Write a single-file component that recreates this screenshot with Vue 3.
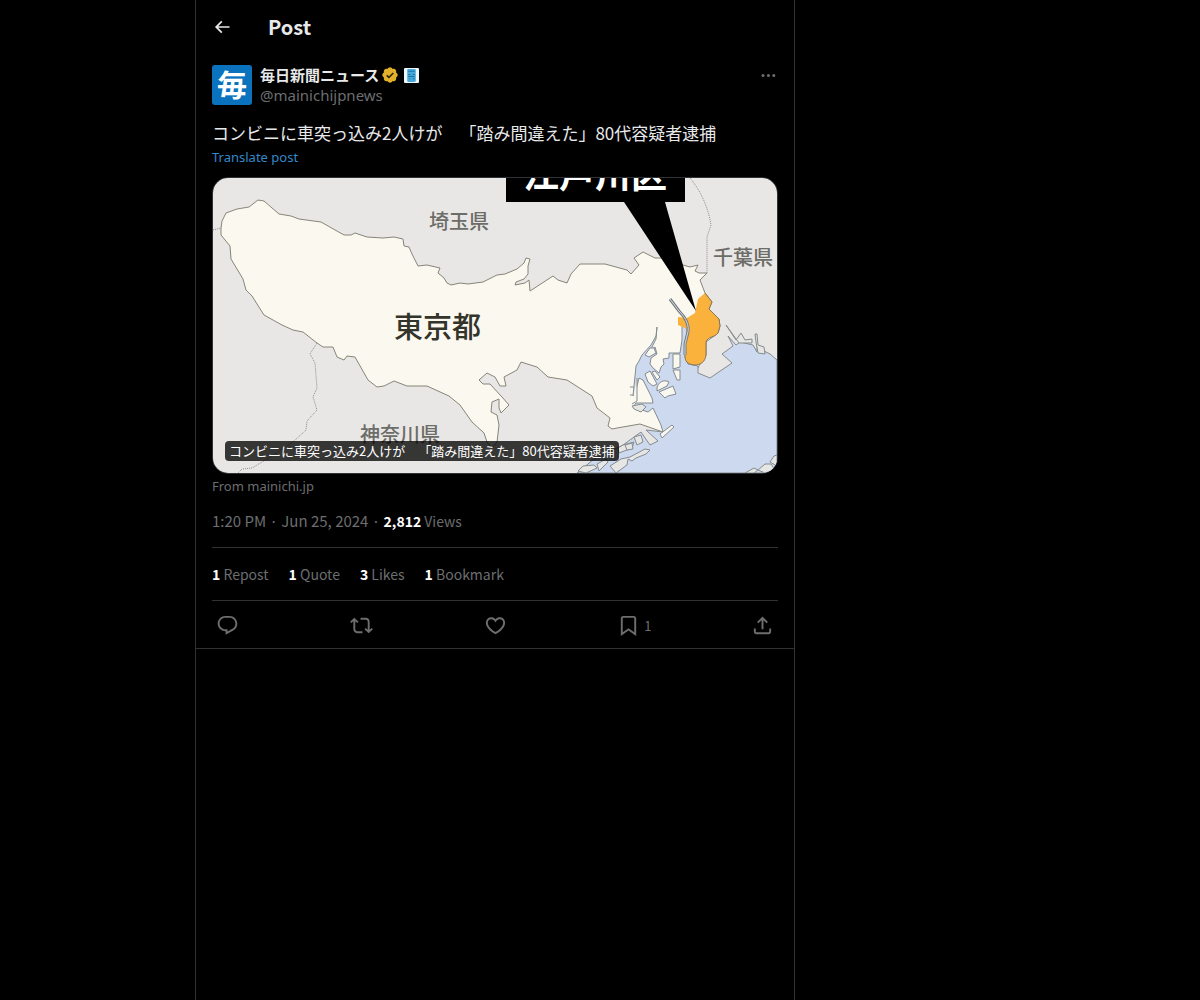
<template>
  <div class="page">
    <main class="column">
      <header class="topbar">
        <button type="button" class="icon-button" aria-label="Back">
          <svg class="back-icon" viewBox="0 0 24 24"><path :d="icons.back" /></svg>
        </button>
        <h1>Post</h1>
      </header>

      <article class="post">
        <div class="author">
          <a href="#" class="avatar" aria-label="毎日新聞ニュース">
            <svg viewBox="0 0 40 40">
              <rect width="40" height="40" rx="3" fill="#0b72be" />
              <text x="20" y="31" text-anchor="middle" class="avatar-text">毎</text>
            </svg>
          </a>
          <div class="names">
            <div class="name-row">
              <a href="#" class="name">毎日新聞ニュース</a>
              <svg class="verified" viewBox="0 0 22 22">
                <path :d="icons.verified" fill="#e3b02c" />
                <path d="M7 11.5L9.700 14L15 8.500" fill="none" stroke="#2b2308" stroke-width="2" />
              </svg>
              <svg class="affiliate" viewBox="0 0 14 14">
                <rect width="14" height="14" rx="1" fill="#eef8fc" />
                <rect x="3" y="1" width="8" height="12" rx="1" fill="#4aa8d8" />
                <path d="M4 3h6M4 6h2M8 6h2M4 8h6M5 10h1M8 10h2" stroke="#1873ad" />
              </svg>
            </div>
            <a href="#" class="handle">@mainichijpnews</a>
          </div>
          <button type="button" class="icon-button more" aria-label="More">
            <svg viewBox="0 0 24 24">
              <circle cx="6" cy="12.500" r="1.800" />
              <circle cx="12.500" cy="12.500" r="1.800" />
              <circle cx="19" cy="12.500" r="1.800" />
            </svg>
          </button>
        </div>

        <p class="text">{{ headline }}</p>
        <button type="button" class="translate">Translate post</button>

        <a href="#" class="card" :aria-label="headline">
          <svg class="map" viewBox="213 178 564 295">
            <rect x="213" y="178" width="564" height="295" fill="#e9e7e5" />
            <path class="tokyo" :d="map.tokyo" />
            <path class="sea" :d="map.sea" />
            <path v-for="(d, i) in map.islands" :key="i" class="island" :d="d" />
            <path v-for="(d, i) in map.piers" :key="'p' + i" class="pier" :d="d" />
            <path class="ward" :d="map.ward" />
            <path class="ward-edge" d="M705 293L712 302 709 309 719 319 720 326 718 333C714 338 708 336 706 342L706 355C705 362 701 365 694 365 687 364 685 361 685 356L685 342 688 330" />
            <path class="river-edge" d="M670 299L679 311C687 319 689 326 688 332L685 344 685 355" />
            <path class="river" d="M670 299L679 311C687 319 689 326 688 332L685 344 685 355" />
            <path class="border" d="M213 230L221 228M317 343L310 354 315 363 317 388 313 397 317 410 307 421 306 430 294 441 272 456 252 468 242 469 238 473M690 178C700 190 708 206 711 225L707 237 707 273" />
            <path d="M506 178H685V202H665L696 311 624 202H506Z" fill="#000" />
            <text class="label-ward" x="523" y="188">江戸川区</text>
            <text class="label" x="429" y="229">埼玉県</text>
            <text class="label" x="713" y="265">千葉県</text>
            <text class="label" x="360" y="442">神奈川県</text>
            <text class="label-main" x="394" y="338">東京都</text>
          </svg>
          <span class="caption">{{ headline }}</span>
        </a>
        <a href="#" class="source">From mainichi.jp</a>

        <div class="meta">
          <time datetime="2024-06-25T13:20">1:20 PM · Jun 25, 2024</time> ·
          <span class="views"><b>2,812</b> Views</span>
        </div>

        <div class="stats">
          <a v-for="stat in stats" :key="stat.label" href="#"><b>{{ stat.count }}</b> {{ stat.label }}</a>
        </div>

        <div class="actions">
          <button v-for="action in actions" :key="action.label" type="button" :aria-label="action.label">
            <svg viewBox="0 0 24 24"><path :d="icons[action.icon]" /></svg>
            <span v-if="action.count">{{ action.count }}</span>
          </button>
        </div>
      </article>
    </main>
  </div>
</template>

<script setup>
const headline = 'コンビニに車突っ込み2人けが　「踏み間違えた」80代容疑者逮捕'

const stats = [
  { count: 1, label: 'Repost' },
  { count: 1, label: 'Quote' },
  { count: 3, label: 'Likes' },
  { count: 1, label: 'Bookmark' }
]

const actions = [
  { icon: 'reply', label: 'Reply' },
  { icon: 'repost', label: 'Repost' },
  { icon: 'like', label: 'Like' },
  { icon: 'bookmark', label: 'Bookmark', count: 1 },
  { icon: 'share', label: 'Share' }
]

const icons = {
  back: 'M7.414 13l5.043 5.04-1.414 1.42L3.586 12l7.457-7.46 1.414 1.42L7.414 11H21v2H7.414z',
  verified: 'M20.396 11c-.018-.646-.215-1.275-.57-1.816-.354-.54-.852-.972-1.438-1.246.223-.607.27-1.264.14-1.897-.131-.634-.437-1.218-.882-1.687-.47-.445-1.053-.75-1.687-.882-.633-.13-1.29-.083-1.897.14-.273-.587-.704-1.086-1.245-1.44S11.647 1.62 11 1.604c-.646.017-1.273.213-1.813.568s-.969.854-1.24 1.44c-.608-.223-1.267-.272-1.902-.14-.635.13-1.22.436-1.69.882-.445.47-.749 1.055-.878 1.688-.13.633-.08 1.29.144 1.896-.587.274-1.087.705-1.443 1.245-.356.54-.555 1.17-.574 1.817.02.647.218 1.276.574 1.817.356.54.856.972 1.443 1.245-.224.606-.274 1.263-.144 1.896.13.634.433 1.218.877 1.688.47.443 1.054.747 1.687.878.633.132 1.29.084 1.897-.136.274.586.705 1.084 1.246 1.439.54.354 1.17.551 1.816.569.647-.016 1.276-.213 1.817-.567s.972-.854 1.245-1.44c.604.239 1.266.296 1.903.164.636-.132 1.22-.447 1.68-.907.46-.46.776-1.044.908-1.681s.075-1.299-.165-1.903c.586-.274 1.084-.705 1.439-1.246.354-.54.551-1.17.569-1.816z',
  reply: 'M1.751 10c0-4.42 3.584-8 8.005-8h4.366c4.49 0 8.129 3.64 8.129 8.13 0 2.96-1.607 5.68-4.196 7.11l-8.054 4.46v-3.69h-.067c-4.49.1-8.183-3.51-8.183-8.01zm8.005-6c-3.317 0-6.005 2.69-6.005 6 0 3.37 2.77 6.08 6.138 6.01l.351-.01h1.761v2.3l5.087-2.81c1.951-1.08 3.163-3.13 3.163-5.36 0-3.39-2.744-6.13-6.129-6.13H9.756z',
  repost: 'M4.5 3.88l4.432 4.14-1.364 1.46L5.5 7.55V16c0 1.1.896 2 2 2H13v2H7.5c-2.209 0-4-1.79-4-4V7.55L1.432 9.48.068 8.02 4.5 3.88zM16.5 6H11V4h5.5c2.209 0 4 1.79 4 4v8.45l2.068-1.93 1.364 1.46-4.432 4.14-4.432-4.14 1.364-1.46 2.068 1.93V8c0-1.1-.896-2-2-2z',
  like: 'M16.697 5.5c-1.222-.06-2.679.51-3.89 2.16l-.805 1.09-.806-1.09C9.984 6.01 8.526 5.44 7.304 5.5c-1.243.07-2.349.78-2.91 1.91-.552 1.12-.633 2.78.479 4.82 1.074 1.97 3.257 4.27 7.129 6.61 3.87-2.34 6.052-4.64 7.126-6.61 1.111-2.04 1.03-3.7.477-4.82-.561-1.13-1.666-1.84-2.908-1.91zm4.187 7.69c-1.351 2.48-4.001 5.12-8.379 7.67l-.503.3-.504-.3c-4.379-2.55-7.029-5.19-8.382-7.67-1.36-2.5-1.41-4.86-.514-6.67.887-1.79 2.647-2.91 4.601-3.01 1.651-.09 3.368.56 4.798 2.01 1.429-1.45 3.146-2.1 4.796-2.01 1.954.1 3.714 1.22 4.601 3.01.896 1.81.846 4.17-.514 6.67z',
  bookmark: 'M4 4.5C4 3.12 5.119 2 6.5 2h11C18.881 2 20 3.12 20 4.5v18.44l-8-5.71-8 5.71V4.5zM6.5 4c-.276 0-.5.22-.5.5v14.56l6-4.29 6 4.29V4.5c0-.28-.224-.5-.5-.5h-11z',
  share: 'M12 2.59l5.7 5.7-1.41 1.42L13 6.41V16h-2V6.41l-3.3 3.3-1.41-1.42L12 2.59zM21 15l-.02 3.51c0 1.38-1.12 2.49-2.5 2.49H5.5C4.11 21 3 19.88 3 18.5V15h2v3.5c0 .28.22.5.5.5h12.98c.28 0 .5-.22.5-.5L19 15h2z'
}

const map = {
  tokyo:
    'M221 228L222 221 226 213 237 209 249 207 258 200 264 201 279 214 291 216 299 219 321 222 344 235 351 235 355 233 367 237 383 238 394 237 403 239 404 246 409 247 412 254 418 266 427 265 440 268 438 273 444 278 447 283 451 285 460 283 468 284 483 282 497 275 505 274 517 269 524 263 526 258 530 259 528 266 528 274 524 279 516 282 515 285 525 283 529 280 530 291 553 276 558 280 567 283 571 274 580 264 605 264 627 270 631 274 639 265 634 258 643 252 655 258 662 258 683 265 690 267 698 265 695 271 699 273 707 273 700 280 705 293 712 302 709 309 719 319 720 326 718 333 706 342 706 355 700 364 663 432 640 424 617 428 612 429 608 426 610 418 597 408 592 396 567 380 548 377 537 367 521 362 517 370 504 377 506 386 500 386 495 377 487 373 479 380 483 384 490 384 502 397 509 405 501 413 499 408 499 399 492 402 491 412 497 415 499 425 497 442 492 448 487 442 484 433 472 422 460 405 449 396 427 386 407 386 394 381 384 386 377 387 368 380 355 357 347 356 344 360 337 357 333 347 323 347 317 343 303 332 293 330 282 325 264 315 252 296 246 290 243 279 231 259 230 246 221 235Z',
  sea:
    'M657 327L656 339 648 355 652 349 655 347 657 354 651 358 650 364 653 368 659 373 661 367 664 364 663 359 669 358 669 353 680 353 682 340 682 320 687 330 685 357 688 364 698 366 698 373 710 378 732 363 722 354 733 346 728 336 736 345 740 342 753 345 757 352 757 346 762 350 770 354 777 360V473H577L594 459 623 445 641 432 650 445 658 441 646 430 663 432 661 425 653 408 648 412 633 407 636 403 653 403 652 398 643 380 639 378 635 394 633 396 636 366 639 361 642 355 651 345 656 336Z',
  islands: [
    'M645 355L650 348 654 348 656 353 649 357Z',
    'M645 374L650 371 657 384 653 386 648 382Z',
    'M652 372L655 371 660 377 657 380Z',
    'M673 354H680V367L673 369Z',
    'M673 370H680V380L677 380Z',
    'M657 388C658 382 664 379 669 382L667 386 657 391Z',
    'M659 392L673 386 676 394 668 396 665 398Z',
    'M660 434L672 425 674 427 662 438Z',
    'M637 378V401L632 404M634 387H630M634 395H630'
  ],
  piers: [
    'M632 406L642 404 646 407 641 412 634 409Z',
    'M610 466L621 459 630 457 645 449 650 450 646 454 636 458 632 461 628 459 627 465 616 473Z',
    'M618 448L623 445 634 442 632 448 619 453Z',
    'M625 445L632 443 633 449 627 450Z',
    'M634 437L641 435 643 442 637 445Z',
    'M578 471L583 466 594 465 597 468 586 473Z',
    'M597 464L606 459 608 462 599 471Z',
    'M745 473L754 468 758 470 754 473Z',
    'M758 470L765 464 771 464 775 470 765 473Z',
    'M770 462L774 456 777 455V466Z',
    'M726 325L736 340 741 333 745 340 752 339 752 343 739 343Z',
    'M755 334L757 334 758 345 764 347 765 354 758 353 756 342Z'
  ],
  ward:
    'M705 293L712 302 709 309 719 319 720 326 718 333C714 338 708 336 706 342L706 355C705 362 701 365 694 365 687 364 685 361 685 356L685 342 687 329 678 325V317L687 318 695 313 698 299Z'
}
</script>

<style>
body {
  background: #000;
}
</style>

<style scoped>
.page {
  display: grid;
  grid-template-columns: 195px minmax(0, 600px) 1fr;
  min-height: 100vh;
  background: #000;
  color: #e7e9ea;
  font-family: "Noto Sans CJK JP", sans-serif;
  font-size: 15px;
  line-height: 20px;
  text-spacing-trim: space-all;
}

.column {
  grid-column: 2;
  border: solid #2f3336;
  border-width: 0 1px;
}

a {
  color: inherit;
  text-decoration: none;
}

button {
  display: flex;
  align-items: center;
  padding: 0;
  border: 0;
  background: none;
  color: inherit;
  font: inherit;
  cursor: pointer;
}

svg {
  display: block;
  fill: currentColor;
}

.topbar {
  display: flex;
  align-items: center;
  gap: 36px;
  height: 53px;
  padding: 0 16px;
}

.topbar h1 {
  margin: 0;
  font-size: 20px;
  line-height: 24px;
}

.back-icon {
  width: 20px;
  height: 20px;
}

.post {
  padding: 12px 16px 0;
  border-bottom: 1px solid #2f3336;
}

.author {
  display: flex;
  align-items: flex-start;
  gap: 8px;
}

.avatar,
.avatar svg {
  width: 40px;
  height: 40px;
}

.avatar svg {
  overflow: visible;
}

.avatar-text {
  fill: #fff;
  font-size: 30px;
  font-weight: 700;
}

.names {
  flex: 1;
}

.name-row {
  display: flex;
  align-items: center;
  height: 20px;
}

.name {
  font-weight: 700;
}

.verified {
  width: 18px;
  height: 18px;
  margin: 0 5px 0 2px;
}

.affiliate {
  width: 15px;
  height: 15px;
}

.handle,
.icon-button.more,
.source,
.meta,
.stats,
.actions {
  color: #6c6e70;
}

.handle {
  display: block;
  font-family: "Noto Sans", sans-serif;
}

.more svg {
  width: 20px;
  height: 20px;
}

.text {
  margin: 16px 0 0;
  font-size: 17px;
  line-height: 24px;
}

.translate {
  margin-top: 4px;
  color: #3489c9;
  font-family: "Noto Sans", sans-serif;
  font-size: 13px;
  line-height: 16px;
}

.card {
  display: block;
  position: relative;
  margin-top: 12px;
  overflow: hidden;
  border: 1px solid #2f3336;
  border-radius: 16px;
}

.map {
  width: 100%;
}

.tokyo {
  fill: #fbf9ef;
  stroke: #858579;
}

.sea {
  fill: #ccd9ee;
  stroke: #858b8e;
}

.island {
  fill: #f8f7f0;
  stroke: #858b8e;
}

.pier {
  fill: #e6e7e5;
  stroke: #858b8e;
}

.ward {
  fill: #fbb23c;
}

.ward-edge {
  fill: none;
  stroke: #85765a;
}

.river-edge {
  fill: none;
  stroke: #777b78;
  stroke-width: 3;
}

.river {
  fill: none;
  stroke: #ccd9ee;
}

.border {
  fill: none;
  stroke: #8d8d8a;
  stroke-dasharray: 1 1;
}

.label {
  fill: #6c6c68;
  font-size: 20px;
  font-weight: 500;
}

.label-main {
  fill: #33342a;
  font-size: 29px;
  font-weight: 500;
}

.label-ward {
  fill: #fff;
  font-size: 36px;
  font-weight: 700;
}

.caption {
  position: absolute;
  bottom: 12px;
  left: 12px;
  padding: 0 4px;
  border-radius: 4px;
  background: rgba(0, 0, 0, 0.77);
  color: #fff;
  font-size: 13px;
  line-height: 20px;
}

.source {
  display: block;
  margin-top: 4px;
  font-family: "Noto Sans", sans-serif;
  font-size: 13px;
  line-height: 16px;
}

.meta {
  padding: 17px 0 16px;
  border-bottom: 1px solid #2f3336;
}

.views {
  font-size: 14px;
}

b {
  color: #fff;
}

.stats {
  display: flex;
  gap: 20px;
  padding: 16px 0;
  border-bottom: 1px solid #2f3336;
  font-size: 14px;
}

.actions {
  display: flex;
  height: 47px;
  padding: 0 4px;
}

.actions button {
  flex: 1;
  gap: 4px;
  padding-top: 2px;
}

.actions button:last-child {
  flex: none;
}

.actions svg {
  width: 23px;
  height: 23px;
}

.actions span {
  font-size: 13px;
}
</style>
